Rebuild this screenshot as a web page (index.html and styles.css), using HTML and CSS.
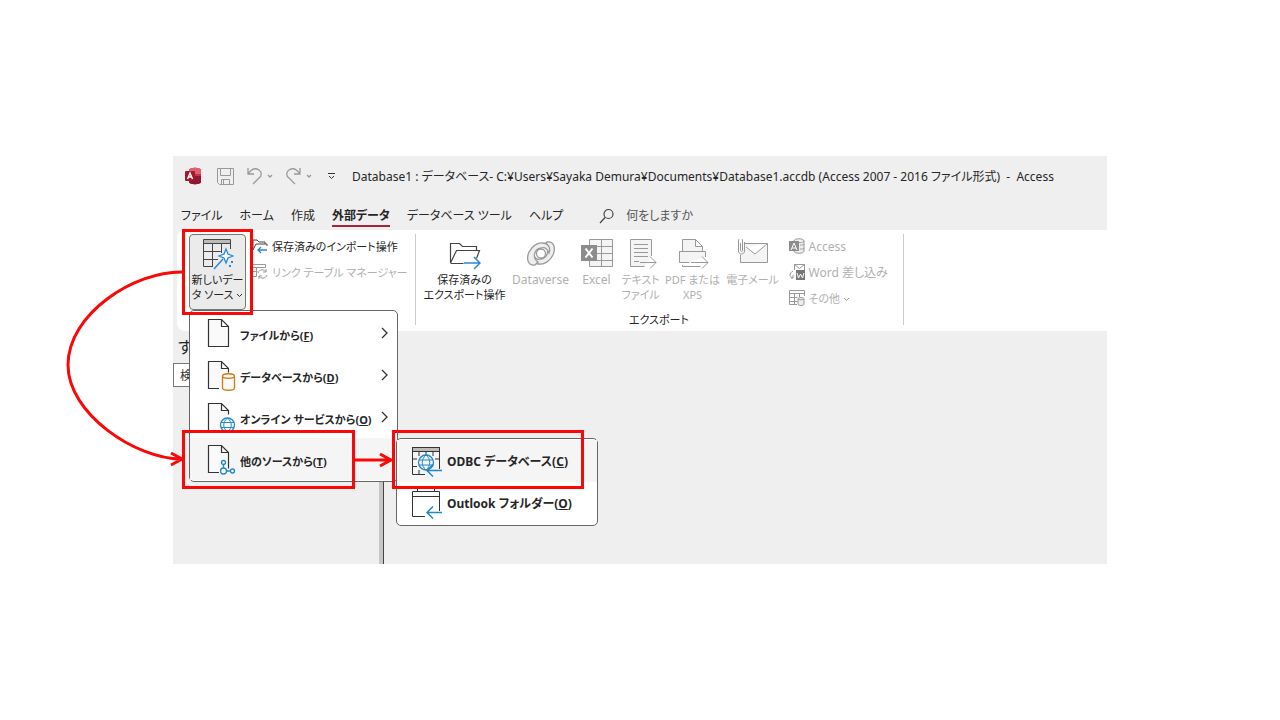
FILE: index.html
```html
<!DOCTYPE html>
<html lang="ja">

<head>
    <meta charset="utf-8">
    <title>Access - 外部データ</title>
    <link rel="stylesheet" href="styles.css">
</head>

<body>
<main class="app">
    <header class="titlebar">
        <svg class="logo" width="18" height="18" viewBox="0 0 18 18">
            <path d="M5 3c0-3 12-3 12 0v12c0 3-12 3-12 0z" fill="#c8324a"/>
            <path d="M9 9h8v6c0 3-12 3-12 0z" fill="#8f1830"/>
            <path d="M5 3c0-3 12-3 12 0v4H5z" fill="#e0606f"/>
            <rect x="1" y="4" width="10" height="10" rx="1" fill="#a4182f"/>
            <path d="M3.500 12 6 6l2.500 6M4.500 10h3" fill="none" stroke="#fff" stroke-width="1.400"/>
        </svg>
        <button type="button" class="quick save" aria-label="上書き保存">
            <svg width="17" height="17" viewBox="0 0 17 17" fill="none" stroke="#999"><path d="M.5.5h16v16h-14l-2-2zM3.500.5v7h10v-7M4.500 16.500v-5h8v5M6.500 12v4"/></svg>
        </button>
        <button type="button" class="quick" aria-label="元に戻す">
            <svg width="28" height="18" viewBox="0 0 28 18" fill="none" stroke="#999" stroke-width="1.300"><path d="M3 1v6h6M3 7c4-6 8-6 11-4s3 6 0 8l-6 6M23 8l2 2 2-2"/></svg>
        </button>
        <button type="button" class="quick" aria-label="やり直し">
            <svg width="28" height="18" viewBox="0 0 28 18" fill="none" stroke="#999" stroke-width="1.300"><path d="M16 1v6h-6M16 7C12 1 8 1 5 3s-3 6 0 8l6 6M23 8l2 2 2-2"/></svg>
        </button>
        <button type="button" class="quick customize" aria-label="カスタマイズ">
            <svg width="9" height="9" viewBox="0 0 9 9" fill="none" stroke="#333"><path d="M1 1.500h7M2 4l2.500 2.500L7 4"/></svg>
        </button>
        <h1 class="title">Database1 : データベース- C:¥Users¥Sayaka Demura¥Documents¥Database1.accdb (Access 2007 - 2016 ファイル形式) &nbsp;-&nbsp; Access</h1>
    </header>

    <nav class="tabs">
        <a href="#file">ファイル</a>
        <a href="#home">ホーム</a>
        <a href="#create">作成</a>
        <a href="#external" class="active">外部データ</a>
        <a href="#tools">データベース ツール</a>
        <a href="#help">ヘルプ</a>
        <label class="search" for="tellme">
            <svg width="16" height="16" viewBox="0 0 16 16" fill="none" stroke="#444" stroke-width="1.200"><circle cx="10.500" cy="6" r="4.500"/><path d="M7 9.500 2 15"/></svg>
            <input type="text" id="tellme" aria-label="操作アシスト" placeholder="何をしますか">
        </label>
    </nav>

    <section class="ribbon">
        <div class="group import">
            <div class="tools">
                <button type="button" class="big pressed">
                    <svg width="32" height="32" viewBox="0 0 32 32" fill="none">
                        <path d="M1.500.5h27v4h-27z" fill="#bbb"/>
                        <path d="M28.500 10V.5h-27v27H11M1.500 4.500h27M10.500 4.500v23M19.500 4.500V14M1.500 12.500H18M1.500 20.500H16" stroke="#444"/>
                        <path d="M12 30 21 20" stroke="#2b88d8" stroke-width="1.500"/>
                        <path d="m24 10 2 5 5 2-5 2-2 5-2-5-5-2 5-2z" fill="#fff" stroke="#2b88d8" stroke-width="1.300"/>
                        <path d="M27 26h2v2h-2zM29 22h2v2h-2zM18 12h1v1h-1z" fill="#2b88d8"/>
                    </svg>
                    <span>新しいデー<br>タ ソース <svg width="7" height="7" viewBox="0 0 7 7" fill="none" stroke="#333"><path d="m1 2 2.500 2.500L6 2"/></svg></span>
                </button>
                <div class="small-list">
                    <button type="button" class="small">
                        <svg width="16" height="16" viewBox="0 0 16 16" fill="none" stroke="#444"><path d="M1 12V2h4l2 2h6v2M1 12 4 6h11v2"/><path d="M15 12H6m3-3-3 3 3 3" stroke="#2b88d8" stroke-width="1.300"/></svg>
                        <span>保存済みのインポート操作</span>
                    </button>
                    <button type="button" class="small" disabled>
                        <svg width="16" height="16" viewBox="0 0 16 16" fill="none" stroke="#999"><path d="M.5.5h13v3H.5zM.5 3.500v9h4M.5 7.500h5M4.500 3.500v9"/><path d="M6 9c1-4 7-4 8-1m0-3v3h-3M15 11c-1 4-7 4-8 1m0 3v-3h3"/></svg>
                        <span>リンク テーブル マネージャー</span>
                    </button>
                </div>
            </div>
        </div>

        <div class="group">
            <div class="tools export">
                <button type="button" class="big">
                    <svg width="32" height="32" viewBox="0 0 32 32" fill="none" stroke="#444">
                        <path d="M1.500 24V4.500h9l3 3h14v4M1.500 24l6-12.500h23l-3 8M1.500 24.500h13" stroke-width="1.200"/>
                        <path d="M15 24h16m-6-6 6 6-6 6" stroke="#2b88d8" stroke-width="1.500"/>
                    </svg>
                    <span>保存済みの<br>エクスポート操作</span>
                </button>
                <button type="button" class="big latin" disabled>
                    <svg width="32" height="32" viewBox="0 0 32 32" fill="#eee" stroke="#999" stroke-width="1.300">
                        <path d="M22 3c7-1 9 6 6 13-3 6-9 10-14 9-5 0-8-5-6-10 2 5 5 6 8 5 7-1 9-10 3-14z"/>
                        <path d="M10 26c-7 1-9-6-6-13C7 7 13 3 18 4c5 0 8 5 6 10-2-5-5-6-8-5-7 1-9 10-3 14z"/>
                        <circle cx="16" cy="14.500" r="4.500" fill="#fff"/>
                    </svg>
                    <span>Dataverse</span>
                </button>
                <button type="button" class="big latin" disabled>
                    <svg width="32" height="32" viewBox="0 0 32 32" fill="none">
                        <path d="M8.500.5h23v27h-23zM20.500.5v27M8.500 7.500h23M8.500 14.500h23M8.500 21.500h23" fill="#f4f4f4" stroke="#999"/>
                        <path d="M0 6h16v16H0z" fill="#8c8c8c"/>
                        <path d="m4.500 9.500 7 9m0-9-7 9" stroke="#fff" stroke-width="2"/>
                    </svg>
                    <span>Excel</span>
                </button>
                <button type="button" class="big" disabled>
                    <svg width="32" height="32" viewBox="0 0 32 32" fill="none" stroke="#999">
                        <path d="M26.500 17V.5h-21v27h14" fill="#f4f4f4"/><path d="M9 5.500h14M9 9.500h14M9 13.500h14M9 17.500h14M9 22.500h5M15 23.500h16m-6-6 6 6-6 6"/>
                    </svg>
                    <span>テキスト<br>ファイル</span>
                </button>
                <button type="button" class="big" disabled>
                    <svg width="32" height="32" viewBox="0 0 32 32" fill="none" stroke="#999">
                        <path d="M5.500 13V.5h13l7 7V13M18.500.5v7h7M5.500 26v1.500h18" fill="#f4f4f4"/><path d="M28.500 18v-5.500h-26v11h10" fill="#f4f4f4"/><path d="M14 23.500h17m-6-6 6 6-6 6"/>
                    </svg>
                    <span>PDF または<br>XPS</span>
                </button>
                <button type="button" class="big" disabled>
                    <svg width="32" height="32" viewBox="0 0 32 32" fill="none" stroke="#999">
                        <path d="M3.500 16v7.500h27v-19H8M30.500 4.500 18 15l-9-7" fill="#f4f4f4"/><path d="M7.500 3v9c0 4-6 4-6 0V2c0-4 4-4 4 0v9c0 2-2 2-2 0V4"/>
                    </svg>
                    <span>電子メール</span>
                </button>
                <div class="small-list">
                    <button type="button" class="small latin" disabled>
                        <svg width="16" height="16" viewBox="0 0 16 16" fill="none" stroke="#999"><path d="M5 3c0-3 10-3 10 0v10c0 3-10 3-10 0zM5 3c0 2 10 2 10 0M11 7c2 0 4 0 4-1M11 11c2 0 4 0 4-1" fill="#eee"/><path d="M0 3h10v10H0z" fill="#8c8c8c" stroke="none"/><path d="M2 12 5 5l3 7M3 10h4" stroke="#fff"/></svg>
                        <span>Access</span>
                    </button>
                    <button type="button" class="small latin" disabled>
                        <svg width="16" height="16" viewBox="0 0 16 16" fill="none" stroke="#999"><path d="M5.500 6V.5h10V6M5.500.5l5 4 5-4M4 7c-4 2-4 6 0 7H2m2 0v-3"/><path d="M7 6h9v10H7z" fill="#777" stroke="none"/><path d="m8 9 1.500 5 2-4 2 4L15 9" stroke="#fff"/></svg>
                        <span>Word 差し込み</span>
                    </button>
                    <button type="button" class="small" disabled>
                        <svg width="16" height="16" viewBox="0 0 16 16" fill="none" stroke="#999"><path d="M15.500 6V.5H.5v14H8M.5 3.500h15M5.500 3.500v11M10.500 3.500V7M.5 7.500h8M.5 11.500h8"/><path d="M9 9c0-2 6-2 6 0v5c0 2-6 2-6 0zM9 9c0 1 6 1 6 0" fill="#eee"/></svg>
                        <span>その他 <svg width="7" height="7" viewBox="0 0 7 7" fill="none" stroke="#999"><path d="m1 2 2.500 2.500L6 2"/></svg></span>
                    </button>
                </div>
            </div>
            <div class="group-name">エクスポート</div>
        </div>
    </section>

    <div class="workspace">
        <aside class="nav-pane">
            <h2>すべて</h2>
            <input type="text" aria-label="検索" placeholder="検索">
        </aside>
        <div class="splitter"></div>
    </div>

    <div class="menu source-menu">
        <button type="button">
            <svg width="32" height="32" viewBox="0 0 32 32" fill="#fafafa" stroke="#333"><path d="M1.500 2.500h13l7 7v20h-20zM14.500 2.500v7h7" stroke-width="1.200"/></svg>
            <span>ファイルから(<u>F</u>)</span>
            <svg class="arrow" width="8" height="12" viewBox="0 0 8 12"><path d="m1 1 5 5-5 5"/></svg>
        </button>
        <button type="button">
            <svg width="32" height="32" viewBox="0 0 32 32" fill="#fafafa" stroke="#333"><path d="M12 29.500H1.500v-27h13l7 7v4M14.500 2.500v7h7" stroke-width="1.200"/><path d="M15.500 17c0-3 12-3 12 0v12c0 3-12 3-12 0zM15.500 17c0 3 12 3 12 0" stroke="#d47a12" stroke-width="1.300"/></svg>
            <span>データベースから(<u>D</u>)</span>
            <svg class="arrow" width="8" height="12" viewBox="0 0 8 12"><path d="m1 1 5 5-5 5"/></svg>
        </button>
        <button type="button">
            <svg width="32" height="32" viewBox="0 0 32 32" fill="#fafafa" stroke="#333"><path d="M12 29.500H1.500v-27h13l7 7v4M14.500 2.500v7h7" stroke-width="1.200"/><circle cx="20.500" cy="24" r="7" stroke="#2488c8" stroke-width="1.300"/><path d="M14 21.500h13M14 26.500h13M20.500 17c-5 4-5 10 0 14 5-4 5-10 0-14z" fill="none" stroke="#2488c8"/></svg>
            <span>オンライン サービスから(<u>O</u>)</span>
            <svg class="arrow" width="8" height="12" viewBox="0 0 8 12"><path d="m1 1 5 5-5 5"/></svg>
        </button>
        <button type="button" class="selected">
            <svg width="32" height="32" viewBox="0 0 32 32" fill="#fafafa" stroke="#333"><path d="M12 29.500H1.500v-27h13l7 7v16M14.500 2.500v7h7" stroke-width="1.200"/><path d="M16.500 21v4M20 28h4" stroke="#2488c8" stroke-width="1.300"/><circle cx="16.500" cy="19.500" r="2" stroke="#2488c8" stroke-width="1.300"/><circle cx="16.500" cy="28" r="3" stroke="#2488c8" stroke-width="1.300"/><circle cx="25.500" cy="28" r="2" stroke="#2488c8" stroke-width="1.300"/></svg>
            <span>他のソースから(<u>T</u>)</span>
        </button>
    </div>

    <div class="menu other-menu">
        <button type="button" class="selected">
            <svg width="32" height="32" viewBox="0 0 32 32" fill="none" stroke="#333"><path d="M1.500 2.500h27v4h-27z" fill="#bbb"/><path d="M28.500 24V2.500h-27v27H14M1.500 6.500h27M8 6.500V11M15 6.500V10M22 6.500V11M1.500 14H6M1.500 21.500H6M24 14h4.500M8 25v4.500"/><circle cx="15" cy="17.500" r="7.500" stroke="#2488c8" stroke-width="1.300"/><path d="M8 15h14M8 20h14M15 10c-5 4-5 11 0 15 5-4 5-11 0-15z" stroke="#2488c8"/><path d="M31 25.500H16m6-6-6 6 6 6" stroke="#2488c8" stroke-width="1.500"/></svg>
            <span>ODBC データベース(<u>C</u>)</span>
        </button>
        <button type="button">
            <svg width="32" height="32" viewBox="0 0 32 32" fill="none" stroke="#333"><path d="M28.500 24V4.500h-27v25H14M1.500 9.500h27M6.500 1v4M23.500 1v4"/><path d="M31 25.500H16m6-6-6 6 6 6" stroke="#2488c8" stroke-width="1.500"/></svg>
            <span>Outlook フォルダー(<u>O</u>)</span>
        </button>
    </div>

    <!-- step markers drawn over the window -->
    <div class="mark mark-button"></div>
    <div class="mark mark-source"></div>
    <div class="mark mark-odbc"></div>
    <svg class="curve" width="130" height="220" viewBox="60 260 130 220">
        <path d="M183 272C134 271 68 314 68 365C68 414 136 459 181 459M171 453 182 459 171 465"/>
    </svg>
    <svg class="straight" width="40" height="16" viewBox="0 0 40 16">
        <path d="M0 8h37M26 2 37 8 26 14"/>
    </svg>
</main>
</body>

</html>
```
FILE: styles.css
```css
* {
    box-sizing: border-box;
}

body {
    margin: 0;
    padding: 0 173px;
    min-height: 100vh;
    display: flex;
    align-items: center;
    background-color: #fff;
    color: #262626;
    font-family: "Noto Sans", "Noto Sans CJK JP", sans-serif;
    font-size: 12px;
    font-feature-settings: "palt";
}

button,
input {
    font: inherit;
    color: inherit;
    font-feature-settings: inherit;
    background: none;
    border: none;
    padding: 0;
}

svg {
    flex: none;
}

.app {
    position: relative;
    flex: 1;
    min-width: 0;
    background-color: #efefef;
}

.titlebar {
    display: flex;
    align-items: center;
    height: 40px;
    padding-left: 11px;
    gap: 11px;
}

.quick {
    display: flex;
}

.save {
    margin-left: 4px;
}

.customize {
    margin-left: 4px;
}

.title {
    margin: 0 0 0 5px;
    font-size: 12px;
    font-weight: normal;
    white-space: nowrap;
}

.tabs {
    display: flex;
    height: 34px;
    padding: 11px 0 3px 8px;
    gap: 17px;
    line-height: 18px;
    white-space: nowrap;
}

.tabs a {
    color: inherit;
    text-decoration: none;
}

.tabs .active {
    font-weight: bold;
    border-bottom: 2px solid #a4263c;
}

.search {
    display: flex;
    align-items: center;
    gap: 12px;
    margin-left: 18px;
    padding-bottom: 2px;
}

.search input::placeholder {
    color: #555;
    opacity: 1;
}

.ribbon {
    display: flex;
    margin-left: 4px;
    padding: 4px 0 6px;
    background-color: #fff;
    border-radius: 8px 0 0 8px;
    font-size: 11px;
}

.group {
    display: flex;
    flex-direction: column;
    height: 91px;
    padding: 0 7px;
    border-right: 1px solid #ccc;
}

.import {
    padding-left: 12px;
}

.tools {
    display: flex;
    align-items: flex-start;
}

.export {
    display: grid;
    grid-template-columns: 84px 68px 44px 44px 60px 60px auto;
}

.big {
    display: flex;
    flex-direction: column;
    align-items: center;
    height: 76px;
    padding-top: 4px;
    gap: 1px;
    border: 1px solid transparent;
    border-radius: 4px;
    line-height: 15px;
    white-space: nowrap;
}

.pressed {
    width: 57px;
    margin-right: 6px;
    background-color: #ebebeb;
    border-color: #777;
}

.small-list {
    display: flex;
    flex-direction: column;
    gap: 2px;
}

.export .small-list {
    margin-left: 6px;
    width: 107px;
}

.small {
    display: flex;
    align-items: center;
    gap: 4px;
    height: 24px;
    white-space: nowrap;
}

.latin {
    font-size: 12px;
}

button:disabled {
    color: #b0b0b0;
}

.group-name {
    margin-top: auto;
    line-height: 10px;
    text-align: center;
}

.workspace {
    display: flex;
    height: 233px;
}

.nav-pane {
    width: 206px;
}

.nav-pane h2 {
    margin: 0;
    padding-left: 5px;
    font-size: 16px;
    font-weight: normal;
    line-height: 32px;
}

.nav-pane input {
    width: 100%;
    height: 24px;
    padding: 0 6px;
    background-color: #fff;
    border: 1px solid #777;
}

.nav-pane input::placeholder {
    color: #333;
    opacity: 1;
}

.splitter {
    width: 5px;
    background-color: #c6c6c6;
    border-right: 1px solid #444;
}

.menu {
    position: absolute;
    padding: 1px 0;
    background-color: #fff;
    border: 1px solid #666;
    border-radius: 5px;
    font-weight: bold;
    white-space: nowrap;
}

.menu button {
    display: flex;
    align-items: center;
    width: 100%;
    height: 42px;
    padding: 0 8px 0 17px;
    gap: 1px;
}

.menu span {
    padding-top: 3px;
}

.menu .selected {
    background-color: #f5f5f5;
}

.menu .arrow {
    margin-left: auto;
    fill: none;
    stroke: #333;
    stroke-width: 1.300;
}

.source-menu {
    left: 16px;
    top: 154px;
    width: 209px;
    font-size: 11px;
}

.other-menu {
    left: 223px;
    top: 282px;
    width: 202px;
}

.other-menu button {
    padding-left: 14px;
    gap: 4px;
}

.other-menu span {
    padding-top: 0;
}

.mark {
    position: absolute;
    border: 3px solid #fa0707;
}

.mark-button {
    left: 9px;
    top: 73px;
    width: 71px;
    height: 86px;
}

.mark-source {
    left: 9px;
    top: 274px;
    width: 173px;
    height: 59px;
}

.mark-odbc {
    left: 219px;
    top: 274px;
    width: 192px;
    height: 59px;
}

.curve,
.straight {
    position: absolute;
    fill: none;
    stroke: #fa0707;
    stroke-width: 3;
}

.curve {
    left: -113px;
    top: 104px;
}

.straight {
    left: 181px;
    top: 296px;
}
```
